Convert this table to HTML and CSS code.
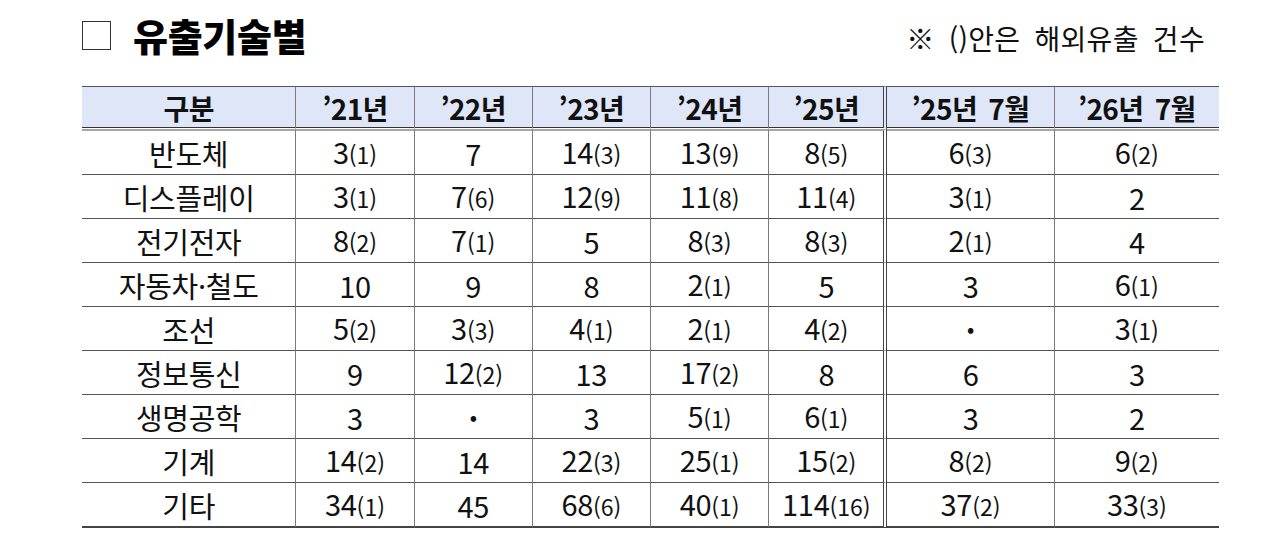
FILE: index.html
```html
<!DOCTYPE html>
<html lang="ko">
<head>
<meta charset="utf-8">
<link rel="stylesheet" href="styles.css">
</head>
<body>
<div class="page">
  <div class="top">
    <div class="title"><span class="box"></span><span class="title-text">유출기술별</span></div>
    <div class="note">※ ()안은 해외유출 건수</div>
  </div>
  <table class="grid">
    <colgroup>
      <col class="c0"><col class="c1"><col class="c1"><col class="c1"><col class="c1"><col class="c1"><col class="c6"><col class="c7">
    </colgroup>
    <thead>
      <tr><th>구분</th><th>’21년</th><th>’22년</th><th>’23년</th><th>’24년</th><th class="dbl">’25년</th><th>’25년 7월</th><th class="last">’26년 7월</th></tr>
    </thead>
    <tbody>
      <tr class="first"><td>반도체</td><td>3<span class="s">(1)</span></td><td>7</td><td>14<span class="s">(3)</span></td><td>13<span class="s">(9)</span></td><td class="dbl">8<span class="s">(5)</span></td><td>6<span class="s">(3)</span></td><td class="last">6<span class="s">(2)</span></td></tr>
      <tr><td>디스플레이</td><td>3<span class="s">(1)</span></td><td>7<span class="s">(6)</span></td><td>12<span class="s">(9)</span></td><td>11<span class="s">(8)</span></td><td class="dbl">11<span class="s">(4)</span></td><td>3<span class="s">(1)</span></td><td class="last">2</td></tr>
      <tr><td>전기전자</td><td>8<span class="s">(2)</span></td><td>7<span class="s">(1)</span></td><td>5</td><td>8<span class="s">(3)</span></td><td class="dbl">8<span class="s">(3)</span></td><td>2<span class="s">(1)</span></td><td class="last">4</td></tr>
      <tr><td>자동차·철도</td><td>10</td><td>9</td><td>8</td><td>2<span class="s">(1)</span></td><td class="dbl">5</td><td>3</td><td class="last">6<span class="s">(1)</span></td></tr>
      <tr><td>조선</td><td>5<span class="s">(2)</span></td><td>3<span class="s">(3)</span></td><td>4<span class="s">(1)</span></td><td>2<span class="s">(1)</span></td><td class="dbl">4<span class="s">(2)</span></td><td><span class="dot">·</span></td><td class="last">3<span class="s">(1)</span></td></tr>
      <tr><td>정보통신</td><td>9</td><td>12<span class="s">(2)</span></td><td>13</td><td>17<span class="s">(2)</span></td><td class="dbl">8</td><td>6</td><td class="last">3</td></tr>
      <tr><td>생명공학</td><td>3</td><td><span class="dot">·</span></td><td>3</td><td>5<span class="s">(1)</span></td><td class="dbl">6<span class="s">(1)</span></td><td>3</td><td class="last">2</td></tr>
      <tr><td>기계</td><td>14<span class="s">(2)</span></td><td>14</td><td>22<span class="s">(3)</span></td><td>25<span class="s">(1)</span></td><td class="dbl">15<span class="s">(2)</span></td><td>8<span class="s">(2)</span></td><td class="last">9<span class="s">(2)</span></td></tr>
      <tr class="end"><td>기타</td><td>34<span class="s">(1)</span></td><td>45</td><td>68<span class="s">(6)</span></td><td>40<span class="s">(1)</span></td><td class="dbl">114<span class="s">(16)</span></td><td>37<span class="s">(2)</span></td><td class="last">33<span class="s">(3)</span></td></tr>
    </tbody>
  </table>
</div>
</body>
</html>
```

FILE: styles.css
```css
html, body {
  margin: 0;
  padding: 0;
  background: #ffffff;
}
body {
  font-family: "Noto Sans CJK KR", "Noto Sans", sans-serif;
  color: #111;
}
.page {
  width: 1137px;
  margin-left: 82px;
}
.top {
  height: 86px;
  display: flex;
  justify-content: space-between;
  align-items: flex-start;
}
.title {
  display: flex;
  align-items: center;
  margin-top: 10px;
  height: 50px;
}
.box {
  width: 29px;
  height: 29px;
  border: 1.5px solid #333;
  box-sizing: border-box;
  margin-right: 22px;
}
.title-text {
  font-size: 38px;
  font-weight: 900;
  letter-spacing: -0.3px;
  line-height: 50px;
  color: #000;
}
.note {
  margin-top: 16px;
  margin-right: 14px;
  font-size: 28px;
  line-height: 44px;
  word-spacing: 6px;
  letter-spacing: 0.3px;
  color: #111;
}
.grid {
  width: 1137px;
  border-collapse: separate;
  border-spacing: 0;
  table-layout: fixed;
}
.c0 { width: 214px; }
.c1 { width: 118px; }
.c6 { width: 167px; }
.c7 { width: 164px; }
th, td {
  text-align: center;
  padding: 0;
  border-right: 1px solid #7a7a7a;
  border-bottom: 1px solid #555;
}
th.last, td.last { border-right: none; }
th.dbl, td.dbl { border-right: 4px double #444; }
th {
  background: #dee6f7;
  border-top: 1px solid #555;
  height: 41px;
  font-size: 28px;
  font-weight: 700;
  line-height: 40px;
  letter-spacing: -0.6px;
  word-spacing: 4px;
  box-shadow: inset 0 -1px 0 #333;
  border-bottom: 1px solid #ffffff;
}
td {
  height: 43px;
  font-size: 29px;
  line-height: 40px;
  letter-spacing: -0.3px;
}
tr.first td {
  border-top: 2px solid #a6a6a6;
  height: 42px;
}
tr.end td {
  border-bottom: 2px solid #444;
}
.s {
  font-size: 23px;
  letter-spacing: 0;
}
.dot {
  font-size: 30px;
  font-weight: 700;
}
```
